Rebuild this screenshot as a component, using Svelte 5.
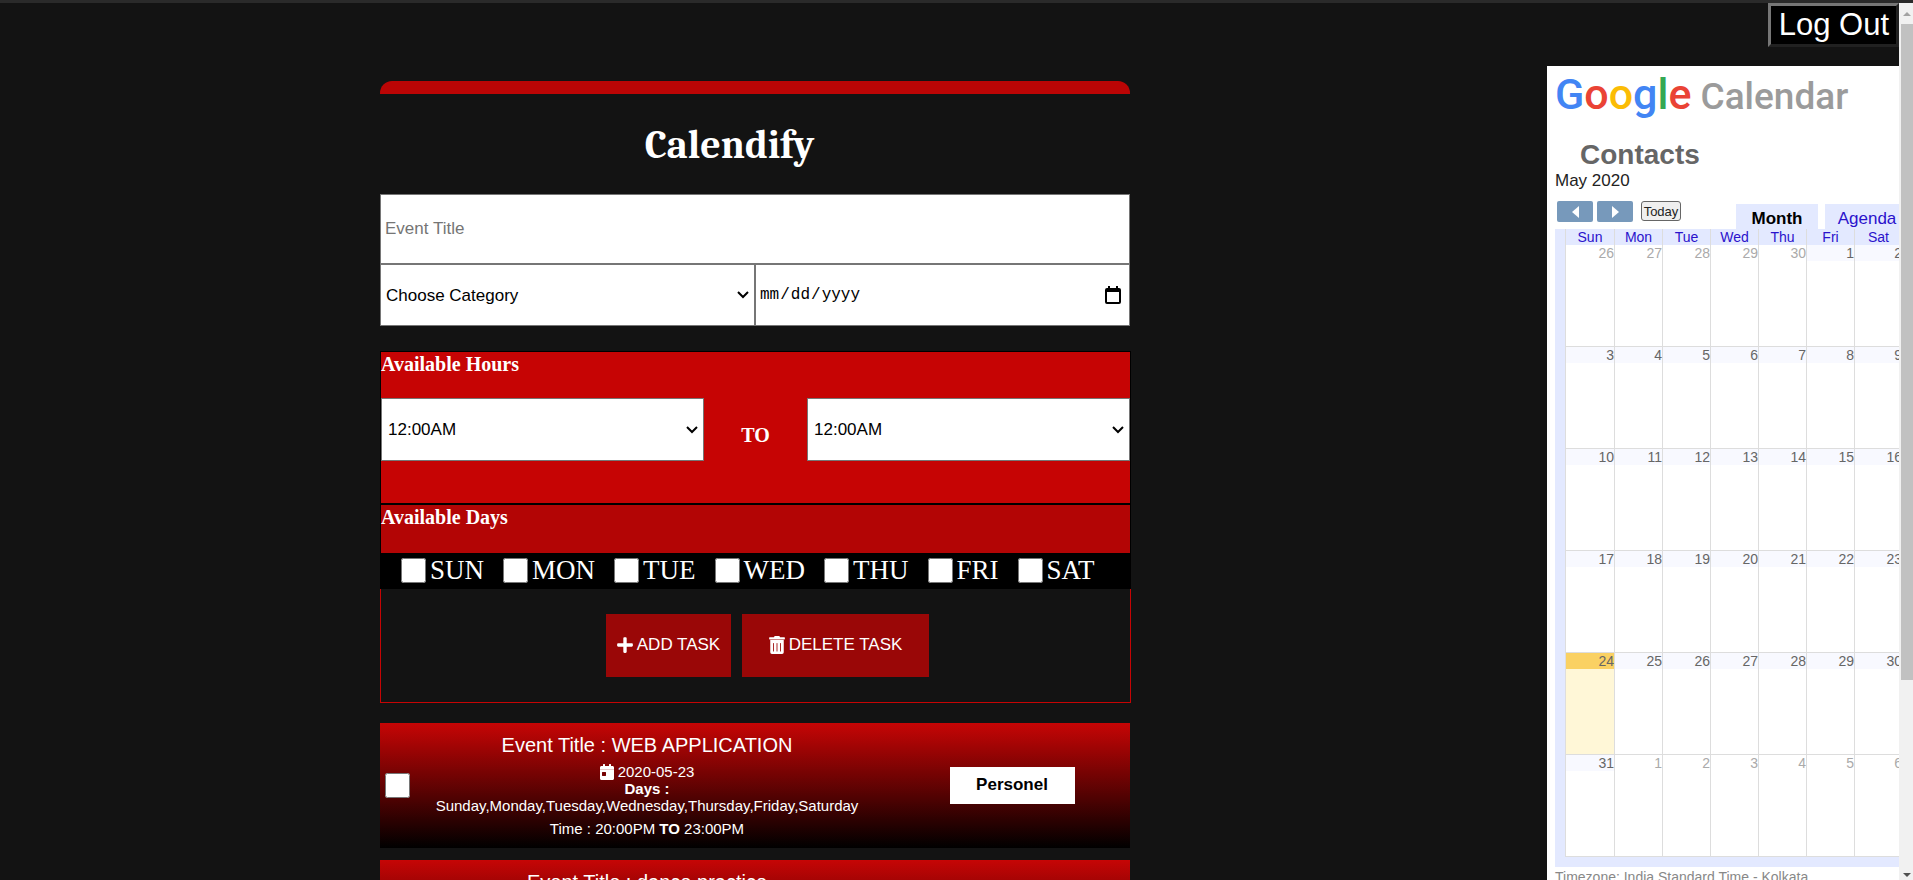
<script>
  const days = ['Sun', 'Mon', 'Tue', 'Wed', 'Thu', 'Fri', 'Sat'];
  const first = new Date(2020, 3, 26);
  const weeks = Array.from({ length: 6 }, (_, w) =>
    Array.from({ length: 7 }, (_, d) => {
      const date = new Date(first.getFullYear(), first.getMonth(), first.getDate() + w * 7 + d);
      const inMonth = date.getMonth() === 4;
      return { n: date.getDate(), inMonth, today: inMonth && date.getDate() === 24 };
    })
  );
  const hours = ['12:00AM', '01:00AM', '02:00AM', '03:00AM'];
  const logo = [
    ['G', 'blue'],
    ['o', 'red'],
    ['o', 'yellow'],
    ['g', 'blue'],
    ['l', 'green'],
    ['e', 'red']
  ];
  const events = [
    {
      title: 'WEB APPLICATION',
      date: '2020-05-23',
      days: 'Sunday,Monday,Tuesday,Wednesday,Thursday,Friday,Saturday',
      from: '20:00PM',
      to: '23:00PM',
      category: 'Personel'
    },
    { title: 'dance practice' }
  ];
</script>

<div class="page">
  <div class="view">
    <header>
      <button class="logout">Log Out</button>
    </header>

    <div class="columns">
      <main>
        <div class="bar"></div>
        <h1>Calendify</h1>

        <input class="field title" type="text" placeholder="Event Title" aria-label="Event Title" />
        <div class="pair">
          <select class="field" aria-label="Choose Category">
            <option>Choose Category</option>
            <option>Personel</option>
          </select>
          <input class="field date" type="date" aria-label="Date" />
        </div>

        <section class="hours">
          <h3 id="hours">Available Hours</h3>
          <div class="range">
            <select class="field" aria-labelledby="hours">
              {#each hours as h}<option>{h}</option>{/each}
            </select>
            <strong>TO</strong>
            <select class="field" aria-labelledby="hours">
              {#each hours as h}<option>{h}</option>{/each}
            </select>
          </div>
        </section>

        <section class="days">
          <h3>Available Days</h3>
        </section>
        <div class="checks">
          {#each days as day}
            <label><input type="checkbox" />{day.toUpperCase()}</label>
          {/each}
        </div>

        <div class="actions">
          <button class="add">
            <svg viewBox="0 0 448 512" aria-hidden="true"><path d="M416 208H272V64c0-17.67-14.33-32-32-32h-32c-17.67 0-32 14.33-32 32v144H32c-17.67 0-32 14.33-32 32v32c0 17.67 14.33 32 32 32h144v144c0 17.67 14.33 32 32 32h32c17.67 0 32-14.33 32-32V304h144c17.67 0 32-14.33 32-32v-32c0-17.67-14.33-32-32-32z" /></svg>
            ADD TASK
          </button>
          <button class="delete">
            <svg viewBox="0 0 448 512" aria-hidden="true"><path d="M32 464a48 48 0 0 0 48 48h288a48 48 0 0 0 48-48V112H32zm280-256a12 12 0 0 1 24 0v224a12 12 0 0 1-24 0zm-100 0a12 12 0 0 1 24 0v224a12 12 0 0 1-24 0zm-100 0a12 12 0 0 1 24 0v224a12 12 0 0 1-24 0zM432 32H312l-9.4-18.7A24 24 0 0 0 281.1 0H166.8a23.72 23.72 0 0 0-21.4 13.3L136 32H16A16 16 0 0 0 0 48v32a16 16 0 0 0 16 16h416a16 16 0 0 0 16-16V48a16 16 0 0 0-16-16z" /></svg>
            DELETE TASK
          </button>
        </div>

        <div class="events">
          {#each events as e, i}
            <article>
              {#if e.category}<input type="checkbox" aria-labelledby="event-{i}" />{:else}<span></span>{/if}
              <div class="info">
                <h2 id="event-{i}">Event Title : {e.title}</h2>
                {#if e.date}
                  <p class="when">
                    <svg viewBox="0 0 448 512" aria-hidden="true"><path d="M0 464c0 26.5 21.5 48 48 48h352c26.5 0 48-21.5 48-48V192H0v272zm64-192c0-8.8 7.2-16 16-16h96c8.8 0 16 7.2 16 16v96c0 8.8-7.2 16-16 16H80c-8.8 0-16-7.2-16-16v-96zM400 64h-48V16c0-8.8-7.2-16-16-16h-32c-8.8 0-16 7.2-16 16v48H160V16c0-8.8-7.2-16-16-16h-32c-8.8 0-16 7.2-16 16v48H48C21.5 64 0 85.5 0 112v48h448v-48c0-26.5-21.5-48-48-48z" /><path class="band" d="M0 160h448v32H0z" /></svg>
                    {e.date}
                  </p>
                  <p><b>Days :</b></p>
                  <p>{e.days}</p>
                  <p class="time">Time : {e.from} <b>TO</b> {e.to}</p>
                {/if}
              </div>
              {#if e.category}<div class="tag"><span>{e.category}</span></div>{/if}
            </article>
          {/each}
        </div>
      </main>

      <aside>
        <div class="logo">
          <span class="google">{#each logo as [ch, tone]}<span class={tone}>{ch}</span>{/each}</span>
          <span class="product">Calendar</span>
        </div>
        <h2>Contacts</h2>
        <div class="month">May 2020</div>
        <div class="toolbar">
          <button class="nav" aria-label="Previous"><svg viewBox="0 0 7 12"><path d="M7 0v12L0 6z" /></svg></button>
          <button class="nav" aria-label="Next"><svg viewBox="0 0 7 12"><path d="M0 0v12l7-6z" /></svg></button>
          <button class="now">Today</button>
          <div class="tabs">
            <button class="tab on">Month</button>
            <button class="tab">Agenda</button>
          </div>
        </div>
        <div class="grid">
          <table>
            <thead>
              <tr>{#each days as day}<th>{day}</th>{/each}</tr>
            </thead>
            <tbody>
              {#each weeks as week}
                <tr>
                  {#each week as c}
                    <td class:in={c.inMonth} class:today={c.today}><div>{c.n}</div></td>
                  {/each}
                </tr>
              {/each}
            </tbody>
          </table>
        </div>
        <div class="zone">Timezone: India Standard Time - Kolkata</div>
      </aside>
    </div>
  </div>

  <div class="scroll" aria-hidden="true">
    <svg class="arrow up" viewBox="0 0 8 4"><path d="M0 4h8L4 0z" /></svg>
    <div class="track"><div class="thumb"></div></div>
    <svg class="arrow down" viewBox="0 0 8 4"><path d="M0 0h8L4 4z" /></svg>
  </div>
</div>

<style>
  :global(body) {
    margin: 0;
    background: #131313;
    overflow: hidden;
  }
  * {
    box-sizing: border-box;
  }
  h1, h2, h3, p {
    margin: 0;
  }
  button, input, select {
    margin: 0;
    font-family: 'Liberation Sans', Arial, sans-serif;
  }
  .page {
    height: 100vh;
    display: flex;
    border-top: 3px solid #2a2a2a;
    background: #131313;
    color: #fff;
    font-family: 'Liberation Sans', Arial, sans-serif;
    overflow: hidden;
  }
  .view {
    flex: 1;
    min-width: 0;
    display: flex;
    flex-direction: column;
    overflow: hidden;
  }
  header {
    display: flex;
    justify-content: flex-end;
    flex: none;
  }
  .logout {
    height: 44px;
    padding: 0 7px 0 8px;
    border: 3px outset #767676;
    background: #000;
    color: #fff;
    font-size: 31px;
    line-height: 36px;
  }
  .columns {
    display: grid;
    grid-template-columns: 380px minmax(0, 751px) 1fr 352px;
    align-items: start;
    padding-top: 19px;
  }
  main {
    grid-column: 2;
    padding-top: 15px;
  }
  .bar {
    height: 13px;
    margin-right: 1px;
    border-radius: 12px 12px 0 0;
    background: #bb0505;
  }
  h1 {
    padding: 2px 52px 0 0;
    font: bold 40px/98px Cambria, 'Liberation Serif', serif;
    text-align: center;
  }
  .field {
    display: block;
    width: 100%;
    height: 63px;
    border: 1px solid #767676;
    border-radius: 0;
    background-color: #fff;
    color: #000;
    font-size: 17px;
    padding: 0 4px;
  }
  select.field {
    appearance: none;
    background-image: url("data:image/svg+xml,%3Csvg xmlns='http://www.w3.org/2000/svg' viewBox='0 0 12 8'%3E%3Cpath d='M1 1l5 5 5-5' fill='none' stroke='%23000' stroke-width='2'/%3E%3C/svg%3E");
    background-repeat: no-repeat;
    background-position: right 5px center;
    background-size: 12px 8px;
  }
  .title {
    width: auto;
    height: 70px;
    min-width: calc(100% - 1px);
  }
  .title::placeholder {
    color: #757575;
  }
  .pair {
    display: grid;
    grid-template-columns: 1fr 1fr;
    margin-right: 1px;
  }
  .pair .field {
    height: 62px;
    padding: 0 5px;
  }
  .pair .date {
    padding: 0 8px 0 3px;
    font: 16px 'Liberation Mono', monospace;
  }
  .date::-webkit-calendar-picker-indicator {
    width: 16px;
    height: 18px;
    padding: 0;
    background: url("data:image/svg+xml,%3Csvg xmlns='http://www.w3.org/2000/svg' viewBox='0 0 16 18'%3E%3Cpath d='M3 0h2v2h6V0h2v2h1a2 2 0 0 1 2 2v12a2 2 0 0 1-2 2H2a2 2 0 0 1-2-2V4a2 2 0 0 1 2-2h1zM2 6v10h12V6z' fill-rule='evenodd'/%3E%3C/svg%3E") center / 16px 18px no-repeat;
  }
  h3 {
    padding-top: 1px;
    font: bold 20px/22px 'Liberation Serif', 'Times New Roman', serif;
  }
  .hours {
    margin-top: 25px;
    padding-bottom: 42px;
    border: 1px solid #000;
    background: #c60404;
  }
  .range {
    display: grid;
    grid-template-columns: 323fr 103fr 323fr;
    align-items: center;
    margin-top: 23px;
  }
  .range strong {
    padding-top: 10px;
    text-align: center;
    font: bold 20px/22px 'Liberation Serif', 'Times New Roman', serif;
  }
  .range select {
    padding: 0 6px;
  }
  .days {
    padding-bottom: 25px;
    border: 1px solid #000;
    border-bottom: 0;
    background: #b30505;
  }
  .checks {
    display: flex;
    align-items: flex-start;
    gap: 19px;
    height: 36px;
    padding-left: 21px;
    background: #000;
  }
  .checks label {
    display: flex;
    align-items: center;
    gap: 4px;
    font: 27px/34px 'Liberation Serif', 'Times New Roman', serif;
  }
  input[type='checkbox'] {
    width: 25px;
    height: 25px;
  }
  .actions {
    display: flex;
    justify-content: center;
    gap: 11px;
    padding: 25px 0 25px 24px;
    border: 1px solid #c60404;
    border-top: 0;
  }
  .actions button {
    display: flex;
    align-items: center;
    justify-content: center;
    gap: 4px;
    height: 63px;
    border: 0;
    background: #9a0707;
    color: #fff;
    font-size: 17px;
  }
  .actions svg {
    width: 16px;
    height: 18px;
    fill: #fff;
  }
  .actions .add {
    width: 125px;
    padding: 0 0 2px;
  }
  .actions .delete {
    width: 187px;
    padding: 0 0 2px;
  }
  .events {
    display: grid;
    gap: 12px;
    margin: 20px 1px 0 0;
  }
  article {
    display: grid;
    grid-template-columns: 36px 462fr 252fr;
    align-items: center;
    height: 125px;
    background: linear-gradient(#c60505, #000);
  }
  article > input {
    margin-left: 5px;
  }
  .info {
    align-self: start;
    padding-top: 5px;
    text-align: center;
    font-size: 15px;
    line-height: 17px;
  }
  .info h2 {
    font-size: 20px;
    font-weight: normal;
    line-height: 35px;
  }
  .when {
    display: flex;
    justify-content: center;
    align-items: center;
    gap: 4px;
  }
  .when svg {
    width: 14px;
    height: 16px;
    fill: #fff;
  }
  .band {
    fill: #e8c8c8;
  }
  .time {
    padding-top: 6px;
  }
  .tag {
    display: flex;
    justify-content: center;
    padding-left: 16px;
  }
  .tag span {
    width: 125px;
    padding-bottom: 2px;
    background: #fff;
    color: #000;
    font-size: 17px;
    font-weight: bold;
    line-height: 35px;
    text-align: center;
  }
  aside {
    grid-column: 4;
    padding-left: 8px;
    background: #fff;
    color: #222;
    overflow: hidden;
  }
  .logo {
    display: flex;
    align-items: baseline;
    gap: 9px;
    height: 56px;
    font-family: Roboto, sans-serif;
    line-height: 56px;
  }
  .google {
    font-size: 43px;
    font-weight: 500;
  }
  .product {
    font-size: 37px;
    font-weight: 500;
    color: #9b9b9b;
  }
  .blue { color: #4285f4; }
  .red { color: #ea4335; }
  .yellow { color: #fbbc05; }
  .green { color: #34a853; }
  aside h2 {
    margin-top: 16px;
    padding-left: 25px;
    color: #666;
    font-size: 28px;
    line-height: 34px;
  }
  .month {
    font-size: 17px;
    line-height: 18px;
  }
  .toolbar {
    display: flex;
    gap: 4px;
    height: 39px;
    padding: 11px 0 0 2px;
  }
  .nav {
    display: flex;
    align-items: center;
    justify-content: center;
    flex: none;
    width: 36px;
    height: 21px;
    padding: 0;
    border: 0;
    border-radius: 2px;
    background: #7799bb;
  }
  .nav svg {
    width: 7px;
    height: 12px;
    fill: #fff;
  }
  .now {
    flex: none;
    width: 40px;
    height: 20px;
    margin-left: 4px;
    padding: 0;
    border: 1px solid #666;
    border-radius: 3px;
    background: #efefef;
    color: #222;
    font-size: 13px;
  }
  .tabs {
    display: flex;
    flex: none;
    gap: 7px;
    margin: 3px 0 0 51px;
  }
  .tab {
    width: 84px;
    padding: 4px 0 0;
    border: 0;
    background: #e3e9ff;
    color: #2a12cc;
    font-size: 17px;
  }
  .tab.on {
    width: 82px;
    color: #000;
    font-weight: bold;
  }
  .grid {
    padding: 0 0 10px 10px;
    background: #e3e9ff;
  }
  table {
    table-layout: fixed;
    width: 337px;
    border-spacing: 0;
    background: #fff;
    font-size: 14px;
    line-height: 16px;
  }
  th, td {
    width: 48px;
    padding: 0;
    border-left: 1px solid #ddd;
  }
  th:first-child, td:first-child {
    width: 49px;
  }
  th {
    background: #e3e9ff;
    color: #2a12cc;
    font-weight: normal;
  }
  td {
    height: 102px;
    border-bottom: 1px solid #ddd;
    vertical-align: top;
    text-align: right;
    color: #aaa;
  }
  .in {
    color: #666;
  }
  .in div {
    background: #f8f9ff;
  }
  .today {
    background: #fff7d7;
  }
  .today div {
    background: #fad163;
  }
  .zone {
    color: #888;
    font-size: 14px;
    line-height: 20px;
    white-space: nowrap;
  }
  .scroll {
    display: flex;
    flex-direction: column;
    flex: none;
    width: 14px;
    background: #f1f1f1;
  }
  .arrow {
    width: 8px;
    height: 4px;
    margin: 9px 0 8px 4px;
    fill: #a3a3a3;
  }
  .down {
    margin: 8px 0 3px 4px;
    fill: #505050;
  }
  .track {
    flex: 1;
    padding-left: 2px;
  }
  .thumb {
    height: 78%;
    background: #c1c1c1;
  }
</style>
